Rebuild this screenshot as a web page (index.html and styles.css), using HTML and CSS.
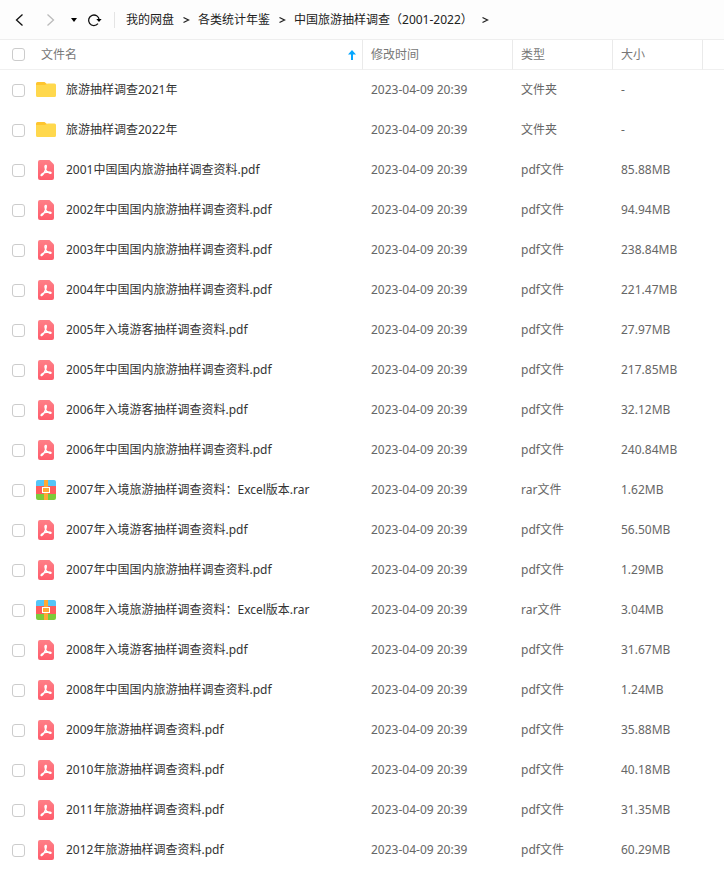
FILE: index.html
```
<!DOCTYPE html>
<html lang="zh-CN">
<head>
    <meta charset="UTF-8">
    <meta name="viewport" content="width=device-width, initial-scale=1.0">
    <title>我的网盘</title>
    <link rel="stylesheet" href="styles.css">
</head>
<body>

    <!-- Shared icons -->
    <svg class="sprite" aria-hidden="true">
        <defs>
            <linearGradient id="pdfFill" x1="0" y1="0" x2="0" y2="1">
                <stop offset="0" stop-color="#ff7f87"/>
                <stop offset="1" stop-color="#ff5c6c"/>
            </linearGradient>
            <clipPath id="rarClip"><rect width="20" height="20" rx="2"/></clipPath>
        </defs>
        <symbol id="folder" viewBox="0 0 20 20">
            <path fill="#ffc52e" d="M1.500 2H8.500L11 4V9H0V3.500Q0 2 1.500 2Z"/>
            <path fill="#ffd84d" d="M0 5H8.500Q9.500 5 10.300 4.200Q11 3.500 12 3.500H18.500Q20 3.500 20 5V15.500Q20 17 18.500 17H1.500Q0 17 0 15.500Z"/>
        </symbol>
        <symbol id="pdf" viewBox="0 0 20 20">
            <path fill="url(#pdfFill)" d="M4 0H13.500L18 4.500V18Q18 20 16 20H4Q2 20 2 18V2Q2 0 4 0Z"/>
            <path fill="none" stroke="#fff" stroke-width="1.300" stroke-linecap="round" stroke-linejoin="round" d="M9.300 5.500C10.300 5 10.700 6.300 10 8.200C9.200 11 7.500 14.200 5.900 15.400C4.900 16.100 4.700 15 5.600 14.200C7.400 12.700 11 11.700 14.200 12.200C15.600 12.500 15.300 13.600 14 13.300C12 12.800 9.800 10.500 9.200 8.200C8.800 6.800 8.800 5.900 9.300 5.500Z"/>
        </symbol>
        <symbol id="rar" viewBox="0 0 20 20">
            <g clip-path="url(#rarClip)">
                <rect width="20" height="6" fill="#55c5f7"/>
                <rect y="6" width="20" height="8" fill="#ff5c5c"/>
                <rect y="14" width="20" height="6" fill="#7ccb3a"/>
                <rect x="8" width="4" height="20" fill="#ffa936"/>
            </g>
            <rect x="6.500" y="7.500" width="7" height="5" fill="#ffa936" stroke="#fff"/>
        </symbol>
    </svg>

    <!-- NAVIGATION -->
    <nav class="toolbar">
        <button class="nav-btn" aria-label="后退">
            <svg width="16" height="16" viewBox="0 0 16 16"><path class="line" d="M10.500 2.500L4.500 8L10.500 13.500"/></svg>
        </button>
        <button class="nav-btn forward" aria-label="前进" disabled>
            <svg width="16" height="16" viewBox="0 0 16 16"><path class="line" d="M5.500 2.500L11.500 8L5.500 13.500"/></svg>
        </button>
        <button class="nav-btn history" aria-label="历史">
            <svg width="8" height="16" viewBox="0 0 8 16"><path d="M1 6H7L4 10Z"/></svg>
        </button>
        <button class="nav-btn reload" aria-label="刷新">
            <svg width="16" height="16" viewBox="0 0 16 16">
                <path class="line" d="M12 11.700A5.300 5.300 0 1 1 13.200 7.800"/>
                <path d="M10.300 7H15.600L13 10Z"/>
            </svg>
        </button>
        <div class="crumbs">
            <a href="#">我的网盘</a>
            <svg class="sep" width="8" height="8" viewBox="0 0 8 8"><path class="line" d="M1.500 1.500L6.500 4L1.500 6.500"/></svg>
            <a href="#">各类统计年鉴</a>
            <svg class="sep" width="8" height="8" viewBox="0 0 8 8"><path class="line" d="M1.500 1.500L6.500 4L1.500 6.500"/></svg>
            <a href="#">中国旅游抽样调查（2001-2022）</a>
            <svg class="sep" width="8" height="8" viewBox="0 0 8 8"><path class="line" d="M1.500 1.500L6.500 4L1.500 6.500"/></svg>
        </div>
    </nav>

    <!-- FILE LIST -->
    <table class="files">
        <colgroup>
            <col class="col-name">
            <col class="col-time">
            <col class="col-type">
            <col class="col-size">
            <col class="col-rest">
        </colgroup>
        <thead>
            <tr>
                <th><div class="name"><input type="checkbox" aria-label="全选"><span class="label">文件名</span><svg width="8" height="10" viewBox="0 0 8 10"><path fill="#06a7ff" d="M4 0L8 4.500H5V10H3V4.500H0Z"/></svg></div></th>
                <th>修改时间</th>
                <th>类型</th>
                <th>大小</th>
                <td></td>
            </tr>
        </thead>
        <tbody>
            <tr>
                <td><label class="name"><input type="checkbox"><svg class="icon"><use href="#folder"/></svg>旅游抽样调查2021年</label></td>
                <td>2023-04-09 20:39</td><td>文件夹</td><td>-</td><td></td>
            </tr>
            <tr>
                <td><label class="name"><input type="checkbox"><svg class="icon"><use href="#folder"/></svg>旅游抽样调查2022年</label></td>
                <td>2023-04-09 20:39</td><td>文件夹</td><td>-</td><td></td>
            </tr>
            <tr>
                <td><label class="name"><input type="checkbox"><svg class="icon"><use href="#pdf"/></svg>2001中国国内旅游抽样调查资料.pdf</label></td>
                <td>2023-04-09 20:39</td><td>pdf文件</td><td>85.88MB</td><td></td>
            </tr>
            <tr>
                <td><label class="name"><input type="checkbox"><svg class="icon"><use href="#pdf"/></svg>2002年中国国内旅游抽样调查资料.pdf</label></td>
                <td>2023-04-09 20:39</td><td>pdf文件</td><td>94.94MB</td><td></td>
            </tr>
            <tr>
                <td><label class="name"><input type="checkbox"><svg class="icon"><use href="#pdf"/></svg>2003年中国国内旅游抽样调查资料.pdf</label></td>
                <td>2023-04-09 20:39</td><td>pdf文件</td><td>238.84MB</td><td></td>
            </tr>
            <tr>
                <td><label class="name"><input type="checkbox"><svg class="icon"><use href="#pdf"/></svg>2004年中国国内旅游抽样调查资料.pdf</label></td>
                <td>2023-04-09 20:39</td><td>pdf文件</td><td>221.47MB</td><td></td>
            </tr>
            <tr>
                <td><label class="name"><input type="checkbox"><svg class="icon"><use href="#pdf"/></svg>2005年入境游客抽样调查资料.pdf</label></td>
                <td>2023-04-09 20:39</td><td>pdf文件</td><td>27.97MB</td><td></td>
            </tr>
            <tr>
                <td><label class="name"><input type="checkbox"><svg class="icon"><use href="#pdf"/></svg>2005年中国国内旅游抽样调查资料.pdf</label></td>
                <td>2023-04-09 20:39</td><td>pdf文件</td><td>217.85MB</td><td></td>
            </tr>
            <tr>
                <td><label class="name"><input type="checkbox"><svg class="icon"><use href="#pdf"/></svg>2006年入境游客抽样调查资料.pdf</label></td>
                <td>2023-04-09 20:39</td><td>pdf文件</td><td>32.12MB</td><td></td>
            </tr>
            <tr>
                <td><label class="name"><input type="checkbox"><svg class="icon"><use href="#pdf"/></svg>2006年中国国内旅游抽样调查资料.pdf</label></td>
                <td>2023-04-09 20:39</td><td>pdf文件</td><td>240.84MB</td><td></td>
            </tr>
            <tr>
                <td><label class="name"><input type="checkbox"><svg class="icon"><use href="#rar"/></svg>2007年入境旅游抽样调查资料：Excel版本.rar</label></td>
                <td>2023-04-09 20:39</td><td>rar文件</td><td>1.62MB</td><td></td>
            </tr>
            <tr>
                <td><label class="name"><input type="checkbox"><svg class="icon"><use href="#pdf"/></svg>2007年入境游客抽样调查资料.pdf</label></td>
                <td>2023-04-09 20:39</td><td>pdf文件</td><td>56.50MB</td><td></td>
            </tr>
            <tr>
                <td><label class="name"><input type="checkbox"><svg class="icon"><use href="#pdf"/></svg>2007年中国国内旅游抽样调查资料.pdf</label></td>
                <td>2023-04-09 20:39</td><td>pdf文件</td><td>1.29MB</td><td></td>
            </tr>
            <tr>
                <td><label class="name"><input type="checkbox"><svg class="icon"><use href="#rar"/></svg>2008年入境旅游抽样调查资料：Excel版本.rar</label></td>
                <td>2023-04-09 20:39</td><td>rar文件</td><td>3.04MB</td><td></td>
            </tr>
            <tr>
                <td><label class="name"><input type="checkbox"><svg class="icon"><use href="#pdf"/></svg>2008年入境游客抽样调查资料.pdf</label></td>
                <td>2023-04-09 20:39</td><td>pdf文件</td><td>31.67MB</td><td></td>
            </tr>
            <tr>
                <td><label class="name"><input type="checkbox"><svg class="icon"><use href="#pdf"/></svg>2008年中国国内旅游抽样调查资料.pdf</label></td>
                <td>2023-04-09 20:39</td><td>pdf文件</td><td>1.24MB</td><td></td>
            </tr>
            <tr>
                <td><label class="name"><input type="checkbox"><svg class="icon"><use href="#pdf"/></svg>2009年旅游抽样调查资料.pdf</label></td>
                <td>2023-04-09 20:39</td><td>pdf文件</td><td>35.88MB</td><td></td>
            </tr>
            <tr>
                <td><label class="name"><input type="checkbox"><svg class="icon"><use href="#pdf"/></svg>2010年旅游抽样调查资料.pdf</label></td>
                <td>2023-04-09 20:39</td><td>pdf文件</td><td>40.18MB</td><td></td>
            </tr>
            <tr>
                <td><label class="name"><input type="checkbox"><svg class="icon"><use href="#pdf"/></svg>2011年旅游抽样调查资料.pdf</label></td>
                <td>2023-04-09 20:39</td><td>pdf文件</td><td>31.35MB</td><td></td>
            </tr>
            <tr>
                <td><label class="name"><input type="checkbox"><svg class="icon"><use href="#pdf"/></svg>2012年旅游抽样调查资料.pdf</label></td>
                <td>2023-04-09 20:39</td><td>pdf文件</td><td>60.29MB</td><td></td>
            </tr>
        </tbody>
    </table>

</body>
</html>
```

FILE: styles.css
```
* {
    box-sizing: border-box;
}

body {
    margin: 0;
    background-color: #fff;
    color: #333;
    font-family: "Noto Sans", "Noto Sans CJK SC", sans-serif;
    font-size: 12px;
    line-height: 20px;
}

svg {
    display: block;
    flex: none;
}

.sprite {
    position: absolute;
    width: 0;
    height: 0;
}

.line {
    fill: none;
    stroke: currentColor;
    stroke-width: 1.3;
}

/* NAVIGATION */
.toolbar {
    display: flex;
    align-items: center;
    height: 40px;
    padding-left: 12px;
    border-bottom: 1px solid #eee;
    background-color: #fdfdfd;
}

.nav-btn {
    padding: 0;
    border: 0;
    background: none;
    color: #111;
    cursor: pointer;
}

.forward {
    margin-left: 14px;
    color: #bbb;
}

.history {
    margin-left: 12px;
}

.reload {
    margin-left: 8px;
}

.crumbs {
    display: flex;
    align-items: center;
    height: 16px;
    margin-left: 12px;
    padding-left: 11px;
    border-left: 1px solid #e4e4e4;
    white-space: nowrap;
}

.crumbs a {
    color: #222;
    text-decoration: none;
}

.sep {
    margin: 0 8px;
    color: #222;
}

/* FILE LIST */
.files {
    width: 100%;
    table-layout: fixed;
    border-spacing: 0;
}

.col-time {
    width: 150px;
}

.col-type {
    width: 100px;
}

.col-size {
    width: 90px;
}

.col-rest {
    width: 21px;
}

.files th,
.files td {
    height: 40px;
    padding: 0 0 0 8px;
    color: #666;
    font-weight: 400;
    text-align: left;
    white-space: nowrap;
}

.files thead th,
.files thead td {
    height: 30px;
    border-bottom: 1px solid #f0f0f0;
    color: #777;
}

.files thead th {
    border-right: 1px solid #eaeaea;
}

.files th:first-child,
.files td:first-child {
    padding-left: 12px;
}

.name {
    display: flex;
    align-items: center;
}

tbody .name {
    color: #333;
}

.name input {
    appearance: none;
    width: 13px;
    height: 13px;
    margin: 0;
    border: 1px solid #ccc;
    border-radius: 3px;
    background-color: #fff;
}

.icon {
    width: 20px;
    height: 20px;
    margin: 0 10px 0 11px;
}

.label {
    flex: 1;
    margin-left: 16px;
}

thead .name {
    padding-right: 6px;
}
```
